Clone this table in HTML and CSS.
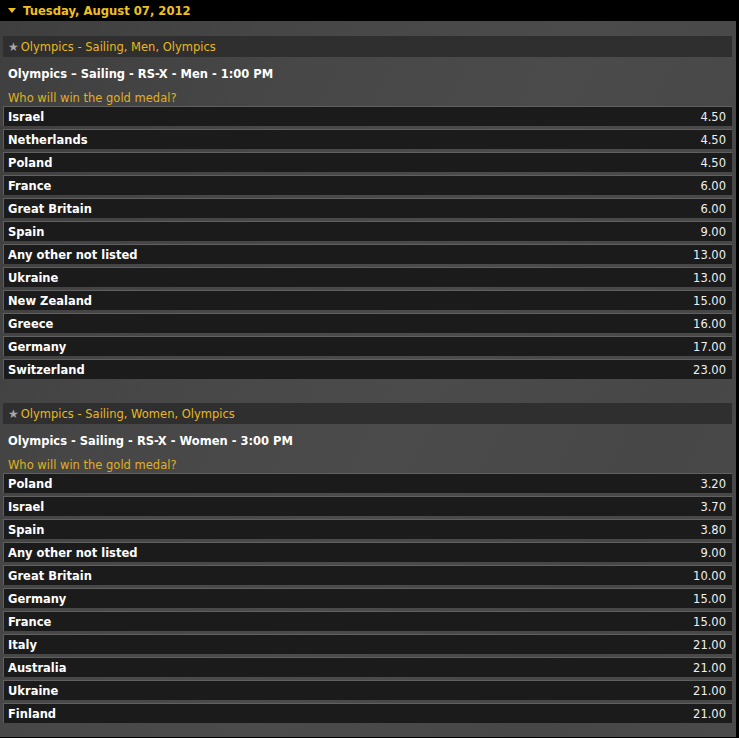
FILE: index.html
```html
<!DOCTYPE html>
<html>
<head>
<meta charset="utf-8">
<link rel="stylesheet" href="styles.css">
</head>
<body>
<div class="day-header">
  <svg class="arrow" width="8" height="5" viewBox="0 0 8 5"><polygon points="0,0 8,0 4,5" fill="#f0c020"/></svg>
  <span>Tuesday, August 07, 2012</span>
</div>
<div class="panel">
  <section class="market">
    <div class="cat"><span class="star">★</span>Olympics - Sailing, Men, Olympics</div>
    <div class="event">Olympics – Sailing - RS-X - Men - 1:00 PM</div>
    <div class="question">Who will win the gold medal?</div>
    <div class="rows">
      <div class="row"><span class="name">Israel</span><span class="odds">4.50</span></div>
      <div class="row"><span class="name">Netherlands</span><span class="odds">4.50</span></div>
      <div class="row"><span class="name">Poland</span><span class="odds">4.50</span></div>
      <div class="row"><span class="name">France</span><span class="odds">6.00</span></div>
      <div class="row"><span class="name">Great Britain</span><span class="odds">6.00</span></div>
      <div class="row"><span class="name">Spain</span><span class="odds">9.00</span></div>
      <div class="row"><span class="name">Any other not listed</span><span class="odds">13.00</span></div>
      <div class="row"><span class="name">Ukraine</span><span class="odds">13.00</span></div>
      <div class="row"><span class="name">New Zealand</span><span class="odds">15.00</span></div>
      <div class="row"><span class="name">Greece</span><span class="odds">16.00</span></div>
      <div class="row"><span class="name">Germany</span><span class="odds">17.00</span></div>
      <div class="row"><span class="name">Switzerland</span><span class="odds">23.00</span></div>
    </div>
  </section>
  <section class="market">
    <div class="cat"><span class="star">★</span>Olympics - Sailing, Women, Olympics</div>
    <div class="event">Olympics - Sailing - RS-X - Women - 3:00 PM</div>
    <div class="question">Who will win the gold medal?</div>
    <div class="rows">
      <div class="row"><span class="name">Poland</span><span class="odds">3.20</span></div>
      <div class="row"><span class="name">Israel</span><span class="odds">3.70</span></div>
      <div class="row"><span class="name">Spain</span><span class="odds">3.80</span></div>
      <div class="row"><span class="name">Any other not listed</span><span class="odds">9.00</span></div>
      <div class="row"><span class="name">Great Britain</span><span class="odds">10.00</span></div>
      <div class="row"><span class="name">Germany</span><span class="odds">15.00</span></div>
      <div class="row"><span class="name">France</span><span class="odds">15.00</span></div>
      <div class="row"><span class="name">Italy</span><span class="odds">21.00</span></div>
      <div class="row"><span class="name">Australia</span><span class="odds">21.00</span></div>
      <div class="row"><span class="name">Ukraine</span><span class="odds">21.00</span></div>
      <div class="row"><span class="name">Finland</span><span class="odds">21.00</span></div>
    </div>
  </section>
</div>
</body>
</html>
```
FILE: styles.css
```css
html, body {
  margin: 0;
  padding: 0;
  background: #000;
  font-family: "DejaVu Sans", Verdana, sans-serif;
  font-size: 11.5px;
  color: #fff;
}
.day-header {
  height: 21px;
  display: flex;
  align-items: center;
  padding-left: 8px;
  gap: 7px;
  color: #f0c020;
  font-weight: bold;
  font-size: 11.6px;
}
.arrow { display: block; }
.panel {
  margin-right: 3px;
  padding: 0 4px 14px 3px;
  background: linear-gradient(115deg, #3f3f3f 0%, #474747 30%, #4b4b4b 55%, #474747 80%, #4a4a4a 100%);
}
.market { padding-top: 15px; }
.market + .market { padding-top: 24px; }
.cat {
  height: 21px;
  display: flex;
  align-items: center;
  background: #2f2f2f;
  color: #e8b820;
  padding-left: 5px;
}
.star {
  color: #a8a8a8;
  font-size: 12px;
  margin-right: 2px;
}
.event {
  margin-top: 9px;
  line-height: 16px;
  font-weight: bold;
  padding-left: 5px;
}
.question {
  margin-top: 8px;
  line-height: 16px;
  color: #e0b020;
  padding-left: 5px;
}
.rows {
  margin-top: 0;
  display: flex;
  flex-direction: column;
  gap: 3px;
}
.row {
  height: 19px;
  display: flex;
  align-items: center;
  justify-content: space-between;
  background: #1b1b1b;
  border-top: 1px solid #606060;
  border-left: 1px solid #606060;
  padding: 0 6px 0 4px;
}
.name { font-weight: bold; }
.odds { color: #f0f0f0; }
```
